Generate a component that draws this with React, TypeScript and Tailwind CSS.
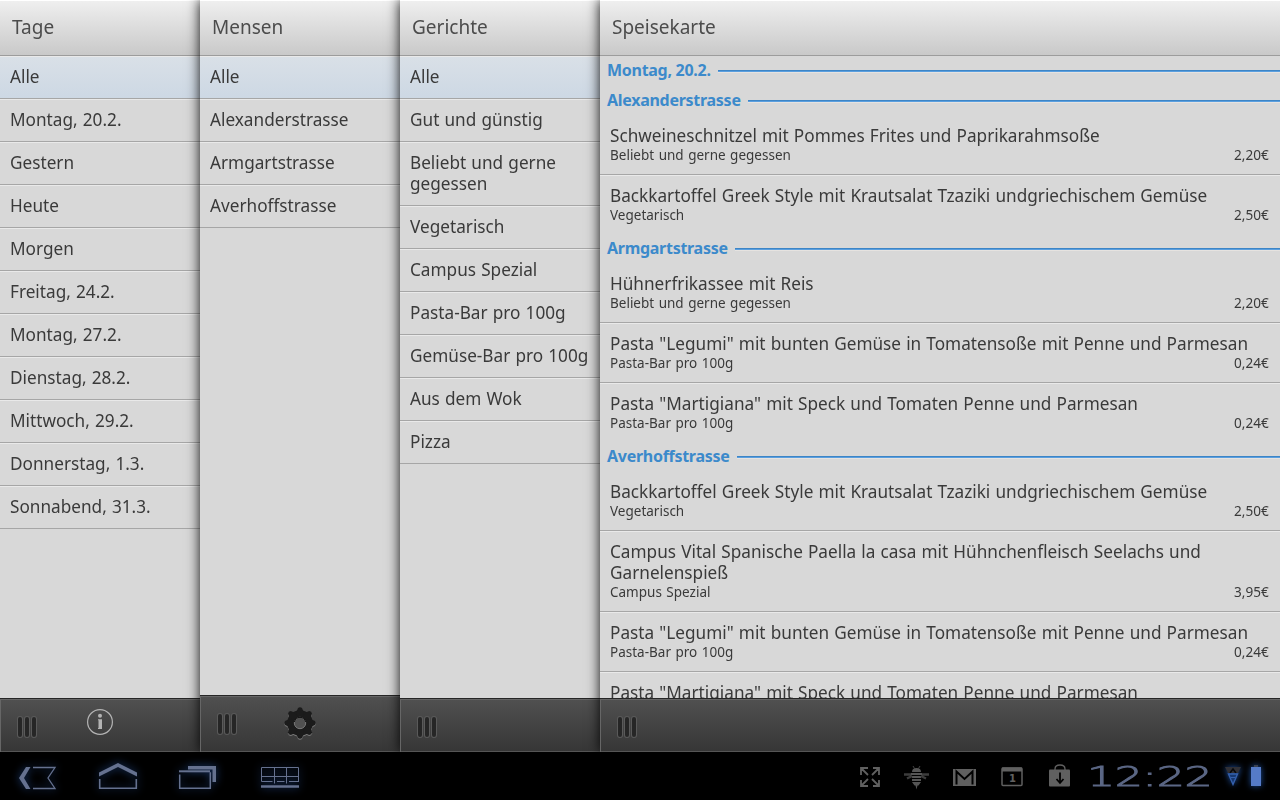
import type { ReactNode } from "react";

const days = ["Alle", "Montag, 20.2.", "Gestern", "Heute", "Morgen", "Freitag, 24.2.", "Montag, 27.2.", "Dienstag, 28.2.", "Mittwoch, 29.2.", "Donnerstag, 1.3.", "Sonnabend, 31.3."];
const canteens = ["Alle", "Alexanderstrasse", "Armgartstrasse", "Averhoffstrasse"];
const dishes = ["Alle", "Gut und günstig", "Beliebt und gerne gegessen", "Vegetarisch", "Campus Spezial", "Pasta-Bar pro 100g", "Gemüse-Bar pro 100g", "Aus dem Wok", "Pizza"];

type Meal = { name: string; kind: string; price: string };
const groups: { place: string; meals: Meal[] }[] = [
  {
    place: "Alexanderstrasse",
    meals: [
      { name: "Schweineschnitzel mit Pommes Frites und Paprikarahmsoße", kind: "Beliebt und gerne gegessen", price: "2,20€" },
      { name: "Backkartoffel Greek Style mit Krautsalat Tzaziki undgriechischem Gemüse", kind: "Vegetarisch", price: "2,50€" },
    ],
  },
  {
    place: "Armgartstrasse",
    meals: [
      { name: "Hühnerfrikassee mit Reis", kind: "Beliebt und gerne gegessen", price: "2,20€" },
      { name: 'Pasta "Legumi" mit bunten Gemüse in Tomatensoße mit Penne und Parmesan', kind: "Pasta-Bar pro 100g", price: "0,24€" },
      { name: 'Pasta "Martigiana" mit Speck und Tomaten Penne und Parmesan', kind: "Pasta-Bar pro 100g", price: "0,24€" },
    ],
  },
  {
    place: "Averhoffstrasse",
    meals: [
      { name: "Backkartoffel Greek Style mit Krautsalat Tzaziki undgriechischem Gemüse", kind: "Vegetarisch", price: "2,50€" },
      { name: "Campus Vital Spanische Paella la casa mit Hühnchenfleisch Seelachs und Garnelenspieß", kind: "Campus Spezial", price: "3,95€" },
      { name: 'Pasta "Legumi" mit bunten Gemüse in Tomatensoße mit Penne und Parmesan', kind: "Pasta-Bar pro 100g", price: "0,24€" },
      { name: 'Pasta "Martigiana" mit Speck und Tomaten Penne und Parmesan', kind: "Pasta-Bar pro 100g", price: "0,24€" },
    ],
  },
];

function Grip() {
  return (
    <div className="flex gap-[3px]">
      {[0, 1, 2].map((i) => (
        <span key={i} className="h-5 w-1 rounded-[2px] bg-[#262626] shadow-[0_0_0_1px_#5a5a5a]" />
      ))}
    </div>
  );
}

function InfoIcon() {
  return (
    <svg width="28" height="28" viewBox="0 0 28 28">
      <circle cx="14" cy="14" r="12.4" fill="none" stroke="#b4b4b4" strokeWidth="1.2" />
      <circle cx="14" cy="7.7" r="2" fill="#b4b4b4" />
      <path d="M12 11.300h4v9.700h-4v-1h.5v-7.700h-.5z" fill="#b4b4b4" />
    </svg>
  );
}

function GearShape() {
  return (
    <>
      <circle cx="16" cy="16" r="12.8" />
      {[0, 45, 90, 135].map((a) => (
        <path key={a} d="M12.500 4.500L14 1Q16-.6 18 1L19.500 4.500V27.500L18 31Q16 32.600 14 31L12.500 27.500z" transform={`rotate(${a} 16 16)`} />
      ))}
    </>
  );
}

function GearIcon() {
  return (
    <svg width="34" height="36" viewBox="-1 -1 34 36">
      <g fill="#7d7d7d" transform="translate(0 1)">
        <GearShape />
      </g>
      <g fill="#1b1b1b">
        <GearShape />
      </g>
      <circle cx="16" cy="16" r="5.700" fill="#505050" stroke="#777" strokeWidth="1" />
      <path d="M10.400 15a5.700 5.700 0 0 1 11.200 0" fill="none" stroke="#111" strokeWidth="1" />
    </svg>
  );
}

function Panel({ title, className, tall, action, children }: { title: string; className: string; tall?: boolean; action?: ReactNode; children: ReactNode }) {
  return (
    <section className={`relative flex h-full flex-col bg-[#d8d8d8] shadow-[0_0_12px_rgba(0,0,0,0.95)] ${className}`}>
      <h1 className="flex h-14 shrink-0 items-center border-t border-b border-t-white border-b-[#9c9c9c] bg-linear-to-b from-[#efefef] to-[#c9c9c9] pb-0.5 pl-3 text-[20px] leading-6 text-[#4c4c4c]">
        <span className="origin-left scale-x-95">{title}</span>
      </h1>
      <div className="min-h-0 flex-1 overflow-hidden">{children}</div>
      <footer
        className={`flex shrink-0 items-start border-t border-t-[#262626] bg-linear-to-b from-[#505050] to-[#363636] pl-[18px] shadow-[inset_1px_1px_0_#666,inset_0_-1px_0_#555] ${tall ? "h-[57px]" : "h-[54px]"}`}
      >
        <div className="flex w-[68px] pt-[18px]">
          <Grip />
        </div>
        {action}
      </footer>
    </section>
  );
}

function FilterList({ items }: { items: string[] }) {
  return (
    <ul>
      {items.map((item, i) => (
        <li
          key={item}
          className={`border-t border-b border-t-[#e9e9e9] border-b-[#a6a6a6] px-2.5 pt-[9px] pb-[11px] text-[18px] leading-[21px] text-[#3a3a3a] ${i === 0 ? "bg-linear-to-b from-[#d9e0e7] to-[#cdd8e4]" : ""}`}
        >
          <span className="block w-[106%] origin-left scale-x-[0.955] [word-spacing:0.7px]">{item}</span>
        </li>
      ))}
    </ul>
  );
}

function Divider({ label }: { label: string }) {
  return (
    <h2 className="flex h-[30px] items-center pl-[7px] text-[16px] leading-5 font-bold tracking-[-0.28px] text-[#3c8acb]">
      <span className="pb-0.5">{label}</span>
      <span className="ml-[7px] h-0.5 flex-1 border-t border-b border-t-[#3d85c6] border-b-[#5b9fdf] shadow-[0_1px_0_#e6e3e0]" />
    </h2>
  );
}

function MealRow({ meal }: { meal: Meal }) {
  return (
    <li className="border-t border-b border-t-[#e9e9e9] border-b-[#a6a6a6] px-2.5 pt-[9px] pb-[11px] text-[#3a3a3a] first:border-t-0 last:border-b-0">
      <p className="w-[104%] origin-left scale-x-[0.955] text-[18px] leading-[21px] [word-spacing:0.7px]">{meal.name}</p>
      <div className="flex justify-between pt-px text-[14px] leading-4">
        <span className="origin-left scale-x-[0.965] [word-spacing:1px]">{meal.kind}</span>
        <span className="origin-right scale-x-[0.97] pr-px">{meal.price}</span>
      </div>
    </li>
  );
}

function NavBar() {
  return (
    <nav className="relative z-10 flex h-12 items-center bg-black text-[#65718f]">
      <svg width="310" height="48" fill="none" stroke="currentColor" className="drop-shadow-[0_0_4px_#1d3f78]">
        <path d="M26 15h4.5l-6.5 11 6.5 11h-4.5l-7-11z" fill="currentColor" stroke="none" />
        <path d="M33 15.500h22l-7 10.500 7 10.500h-22" strokeWidth="1.300" />
        <path d="M99 24.500v-4L118 11l19 9.500v4L118 15z" fill="currentColor" stroke="none" />
        <path d="M99.700 27v9.300h36.600v-9.300" strokeWidth="1.600" />
        <path d="M188 14h28v16h-3.500v-12.500h-24.500z" fill="currentColor" stroke="none" />
        <path d="M179 19.300h31" strokeWidth="2" />
        <path d="M179.700 22.500v13.700h30.600v-16" strokeWidth="1.500" />
        <path d="M261.500 29.500v-14h37v14M261.500 24.500h37M274.500 15.500v16M286.500 15.500v16M261.500 29.500h11M277 29.500h7.500M289 29.500h10" strokeWidth="1" />
        <path d="M261 34.500h38" strokeWidth="2.600" />
      </svg>
      <div className="flex-1" />
      <svg width="220" height="48" viewBox="850 0 220 48" fill="none" stroke="#606060">
        <path d="M861 23v-7h7M862 17l6 6M873 16h6v7M879 16l-7 7M861 28v6h7M861 34l7-7M873 34h6v-6M879 34l-7-7" strokeWidth="1.800" />
        <g fill="#555" stroke="none">
          <path d="M912 20q0-4 4.500-4t4.500 4z" />
          <path d="M911 21h11v2h-11zM912 24h9v2h-9zM912 27h9v2h-9zM912 30h9l-2.500 3.500h-1l-1 4-1-4h-1z" />
          <path d="M904 22.500h7M922 22.500h7M907 26.500l5-2.500M926 26.500l-5-2.500" stroke="#3c3c3c" strokeWidth="2.400" />
          <path d="m913 14 1.500 2.500M920 14l-1.500 2.500" stroke="#555" strokeWidth=".8" />
        </g>
        <rect x="953" y="17" width="23" height="17" fill="#606060" stroke="none" />
        <path d="M956.500 32.500V19.500l8 7.500 8-7.500V32.500" stroke="#000" strokeWidth="2" />
        <rect x="1002" y="16" width="20" height="17.500" strokeWidth="1.500" rx="1" />
        <path d="M1002 17.500h20" strokeWidth="4" />
        <path d="M1055 18v-1q0-4 5-4t5 4v1" strokeWidth="1.300" />
        <rect x="1049" y="17.500" width="21" height="17" rx="1" fill="#606060" stroke="none" />
        <path d="M1060 20.500v9M1056.500 27l3.500 4 3.500-4" stroke="#000" strokeWidth="1.800" />
        <text x="1009" y="30" fontSize="10" fontWeight="700" fontFamily="DejaVu Sans, sans-serif" fill="#606060" stroke="none">1</text>
      </svg>
      <div className="w-[155px] pt-0.5 pl-[17px]">
        <span className="inline-block origin-left scale-x-[1.64] font-['DejaVu_Sans',sans-serif] text-[27px] leading-[48px] font-extralight tracking-[-0.3px] text-[#5b6785] [-webkit-text-stroke:0.9px_#5b6785]">12:22</span>
      </div>
      <svg width="55" height="48" viewBox="1225 0 55 48" className="drop-shadow-[0_0_3px_#1d4f9e]">
        <path d="M1225 15h16l-3 6h-10z" fill="#303036" />
        <path d="m1230 21 3-4 3 4" fill="none" stroke="#08080a" strokeWidth="1.500" />
        <path d="M1228.500 22h9l-4.500 10.500z" fill="#163872" stroke="#3560ac" strokeWidth="1.400" />
        <path d="M1230.500 25.500h5" stroke="#3560ac" />
        <path d="M1254 13h4v2h-4z" fill="#3a4150" />
        <path d="M1251 15h10v19h-10z" fill="#557bc8" />
      </svg>
    </nav>
  );
}

export default function App() {
  return (
    <div className="flex h-[800px] w-[1280px] flex-col overflow-hidden bg-black font-['Noto_Sans',sans-serif]">
      <main className="flex h-[752px] overflow-hidden">
        <Panel title="Tage" className="w-[200px]" action={<span className="pt-[9px]"><InfoIcon /></span>}>
          <FilterList items={days} />
        </Panel>
        <Panel title="Mensen" className="w-[200px]" tall action={<span className="-ml-[3px] pt-2.5"><GearIcon /></span>}>
          <FilterList items={canteens} />
        </Panel>
        <Panel title="Gerichte" className="w-[200px]">
          <FilterList items={dishes} />
        </Panel>
        <Panel title="Speisekarte" className="w-[680px]">
          <Divider label="Montag, 20.2." />
          {groups.map((group) => (
            <section key={group.place}>
              <Divider label={group.place} />
              <ul>
                {group.meals.map((meal) => (
                  <MealRow key={meal.name} meal={meal} />
                ))}
              </ul>
            </section>
          ))}
        </Panel>
      </main>
      <NavBar />
    </div>
  );
}
